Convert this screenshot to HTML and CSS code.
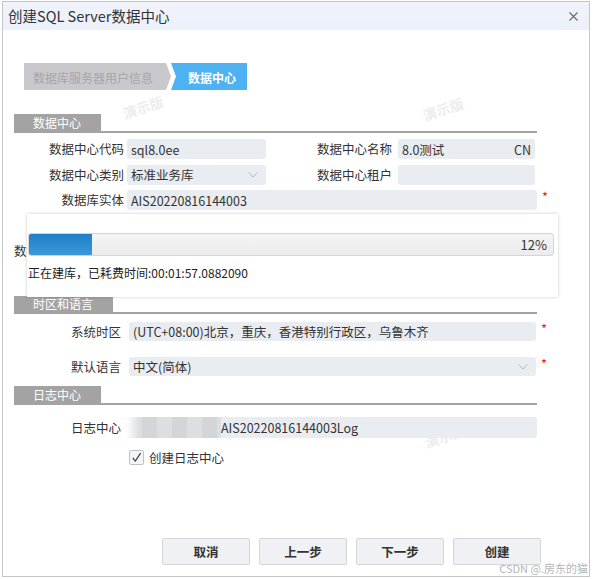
FILE: index.html
```html
<!DOCTYPE html>
<html lang="zh">
<head>
<meta charset="utf-8">
<title>创建SQL Server数据中心</title>
<link rel="stylesheet" href="styles.css">
</head>
<body>
<div class="win">
  <div class="titlebar">
    <span class="title">创建SQL Server数据中心</span>
    <svg class="close" width="9" height="9" viewBox="0 0 9 9"><path d="M0.5 0.5L8.5 8.5M8.5 0.5L0.5 8.5" stroke="#6a6a6a" stroke-width="1.1" fill="none"/></svg>
  </div>
  <div class="wm wm1">演示版</div>
  <div class="wm wm2">演示版</div>
  <div class="wm wm3">演示版</div>
  <div class="content">
    <div class="steps">
      <div class="step done">数据库服务器用户信息</div>
      <div class="step cur">数据中心</div>
    </div>

    <div class="sec s1">
      <div class="sec-head"><span class="tab">数据中心</span></div>
      <div class="row first">
        <span class="lbl">数据中心代码</span>
        <div class="inp w139">sql8.0ee</div>
        <span class="lbl rl">数据中心名称</span>
        <div class="inp w137 right"><span>8.0测试</span><span>CN</span></div>
      </div>
      <div class="row">
        <span class="lbl">数据中心类别</span>
        <div class="inp w139 sel"><span>标准业务库</span><svg class="chev" width="10" height="6" viewBox="0 0 10 6"><path d="M0.5 0.5L5 5L9.5 0.5" stroke="#b5b8bd" stroke-width="1" fill="none"/></svg></div>
        <span class="lbl rl">数据中心租户</span>
        <div class="inp w137"></div>
      </div>
      <div class="row">
        <span class="lbl">数据库实体</span>
        <div class="inp w410">AIS20220816144003</div>
        <span class="req">*</span>
      </div>
      <div class="row hidden-row">
        <span class="lbl lft">数据库服务器地址</span>
        <div class="inp w410"></div>
      </div>
    </div>

    <div class="sec s2">
      <div class="sec-head"><span class="tab">时区和语言</span></div>
      <div class="row2 first">
        <span class="lbl2">系统时区</span>
        <div class="inp w407">(UTC+08:00)北京，重庆，香港特别行政区，乌鲁木齐</div>
        <span class="req">*</span>
      </div>
      <div class="row2 second">
        <span class="lbl2">默认语言</span>
        <div class="inp w407 sel"><span>中文(简体)</span><svg class="chev" width="10" height="6" viewBox="0 0 10 6"><path d="M0.5 0.5L5 5L9.5 0.5" stroke="#b5b8bd" stroke-width="1" fill="none"/></svg></div>
        <span class="req">*</span>
      </div>
    </div>

    <div class="sec s3">
      <div class="sec-head"><span class="tab">日志中心</span></div>
      <div class="row3">
        <span class="lbl2">日志中心</span>
        <div class="inp log"><span class="blur"></span><span>AIS20220816144003Log</span></div>
      </div>
      <div class="chkrow">
        <span class="chk"><svg width="11" height="11" viewBox="0 0 11 11"><path d="M1.8 5.8L4.3 9L9.6 1.2" stroke="#3a3a3a" stroke-width="1.2" fill="none"/></svg></span>
        <span class="chklbl">创建日志中心</span>
      </div>
    </div>

    <div class="footer">
      <button class="btn">取消</button>
      <button class="btn">上一步</button>
      <button class="btn">下一步</button>
      <button class="btn">创建</button>
    </div>
  </div>

  <div class="progress">
    <div class="bar"><div class="fill" style="width:12%"></div><span class="pct">12%</span></div>
    <div class="status">正在建库，已耗费时间:00:01:57.0882090</div>
  </div>
  <div class="csdn">CSDN @.房东的猫</div>
</div>
</body>
</html>
```

FILE: styles.css
```css
html, body {
  margin: 0;
  padding: 0;
  background: #ffffff;
}
body {
  font-family: "Noto Sans CJK SC", "Noto Sans", sans-serif;
  color: #333;
}
.win {
  position: relative;
  margin: 1px 0 0 2px;
  width: 588px;
  height: 576px;
  border: 1px solid #c4c4c4;
  box-sizing: border-box;
  background: #fff;
  overflow: hidden;
}
.titlebar {
  height: 28px;
  background: linear-gradient(#f0f3fb, #ecf0fa);
  display: flex;
  align-items: center;
  justify-content: space-between;
  padding: 0 8px 0 5px;
}
.title {
  font-size: 14.5px;
  color: #333;
  line-height: 28px;
}
.close {
  margin-right: 3px;
}
.content {
  position: relative;
  z-index: 1;
}
.steps {
  display: flex;
  margin: 33px 0 0 21px;
  height: 27px;
}
.step {
  height: 27px;
  line-height: 29px;
  font-size: 12px;
  box-sizing: border-box;
}
.step.done {
  width: 147px;
  background: #c9c9cd;
  color: #a5a5aa;
  padding-left: 9px;
  clip-path: polygon(0 0, calc(100% - 5px) 0, 100% 50%, calc(100% - 5px) 100%, 0 100%);
}
.step.cur {
  width: 76px;
  background: #4db1f2;
  color: #fff;
  font-weight: bold;
  padding-left: 17px;
  clip-path: polygon(0 0, 100% 0, 100% 100%, 0 100%, 5px 50%);
}
.sec {
  margin-left: 11px;
}
.s1 { margin-top: 24px; }
.s2 { margin-top: 35px; }
.s3 { margin-top: 10px; }
.sec-head {
  width: 523px;
  border-bottom: 2px solid #a3a3a3;
  height: 17px;
}
.s2 .sec-head { height: 16px; }
.tab {
  display: inline-block;
  height: 17px;
  line-height: 17px;
  background: #a3a3a3;
  color: #fff;
  font-size: 12px;
  padding: 0 19px;
  box-sizing: border-box;
  vertical-align: top;
}
.s1 .tab { width: 87px; }
.s2 .tab { width: 99px; height: 16px; line-height: 15px; }
.s3 .tab { width: 87px; }
.row {
  display: flex;
  align-items: center;
  height: 20px;
  margin-top: 5.5px;
}
.row.first { margin-top: 6px; }
.row.hidden-row { margin-top: 31px; }
.lbl {
  width: 110px;
  flex: none;
  text-align: right;
  font-size: 12.5px;
  line-height: 20px;
  color: #333;
  white-space: nowrap;
}
.lbl.lft {
  text-align: left;
  overflow: hidden;
}
.lbl.rl {
  width: 126px;
}
.inp {
  flex: none;
  height: 20px;
  margin-left: 3px;
  background: #e9ecf0;
  border-radius: 3px;
  display: flex;
  align-items: center;
  padding: 0 4px;
  box-sizing: border-box;
  font-size: 12.5px;
  color: #333;
  white-space: nowrap;
  overflow: hidden;
}
.lbl.rl + .inp { margin-left: 6px; }
.w139 { width: 139px; }
.w137 { width: 137px; }
.w410 { width: 410px; }
.w407 { width: 407px; }
.right { justify-content: space-between; }
.sel { justify-content: space-between; padding-right: 8px; }
.chev { flex: none; }
.req {
  color: #e8202a;
  font-size: 13px;
  margin-left: 5px;
  line-height: 14px;
  align-self: flex-start;
}
.row2 {
  display: flex;
  align-items: center;
  height: 19px;
}
.row2.first { margin-top: 8px; }
.row2.second { margin-top: 16px; }
.row2 .inp { height: 19px; margin-left: 8px; }
.lbl2 {
  width: 107px;
  flex: none;
  text-align: right;
  font-size: 12.5px;
  line-height: 20px;
  color: #333;
}
.row3 {
  display: flex;
  align-items: center;
  height: 21px;
  margin-top: 12px;
}
.inp.log {
  width: 410px;
  height: 21px;
  margin-left: 6px;
  padding: 0;
}
.blur {
  display: block;
  width: 94px;
  height: 21px;
  flex: none;
  background:
    linear-gradient(90deg, #fff 0, #f2f3f5 4px, transparent 12px),
    repeating-linear-gradient(90deg, #dcdee1 0 15px, #d3d5d9 15px 30px);
}
.chkrow {
  display: flex;
  align-items: center;
  margin-top: 12px;
  padding-left: 115px;
  height: 15px;
}
.chk {
  width: 15px;
  height: 15px;
  box-sizing: border-box;
  border: 1px solid #c2c2c2;
  border-radius: 2px;
  background: #f4f5f7;
  display: flex;
  align-items: center;
  justify-content: center;
}
.chklbl {
  margin-left: 5px;
  font-size: 12.5px;
  line-height: 15px;
  color: #333;
}
.footer {
  display: flex;
  gap: 9px;
  margin: 73px 0 0 159px;
}
.btn {
  width: 88px;
  height: 27px;
  background: #eff1f4;
  border: 1px solid #d3d6db;
  border-radius: 2px;
  font-family: "Noto Sans CJK SC", sans-serif;
  font-size: 12.5px;
  font-weight: bold;
  color: #333;
  padding: 0;
}
.progress {
  position: absolute;
  z-index: 3;
  left: 24px;
  top: 212px;
  width: 531px;
  height: 83px;
  background: #fff;
  box-shadow: 0 0 3px rgba(0, 0, 0, 0.22);
}
.bar {
  position: relative;
  margin: 19px 0 0 1px;
  width: 526px;
  height: 23px;
  box-sizing: border-box;
  border: 1px solid #d5d5d5;
  border-radius: 3px;
  background: linear-gradient(#f4f4f4, #ececec);
  display: flex;
  align-items: center;
  justify-content: flex-end;
}
.fill {
  position: absolute;
  left: 0;
  top: 0;
  bottom: 0;
  background: linear-gradient(#1e7fc8, #3d98da);
  border-radius: 2px 0 0 2px;
}
.pct {
  font-size: 13px;
  color: #333;
  margin-right: 6px;
}
.status {
  margin: 8px 0 0 1px;
  font-size: 12px;
  line-height: 18px;
  color: #222;
  white-space: nowrap;
}
.wm {
  position: absolute;
  z-index: 0;
  color: #ededed;
  font-size: 14px;
  font-weight: bold;
  transform: rotate(-18deg);
  white-space: nowrap;
}
.wm1 { left: 119px; top: 95px; }
.wm2 { left: 419px; top: 97px; }
.wm3 { left: 421px; top: 424px; }
.csdn {
  position: absolute;
  z-index: 4;
  right: 1px;
  bottom: 1px;
  font-size: 11px;
  color: #b5b5b5;
  line-height: 14px;
  white-space: nowrap;
}
```
